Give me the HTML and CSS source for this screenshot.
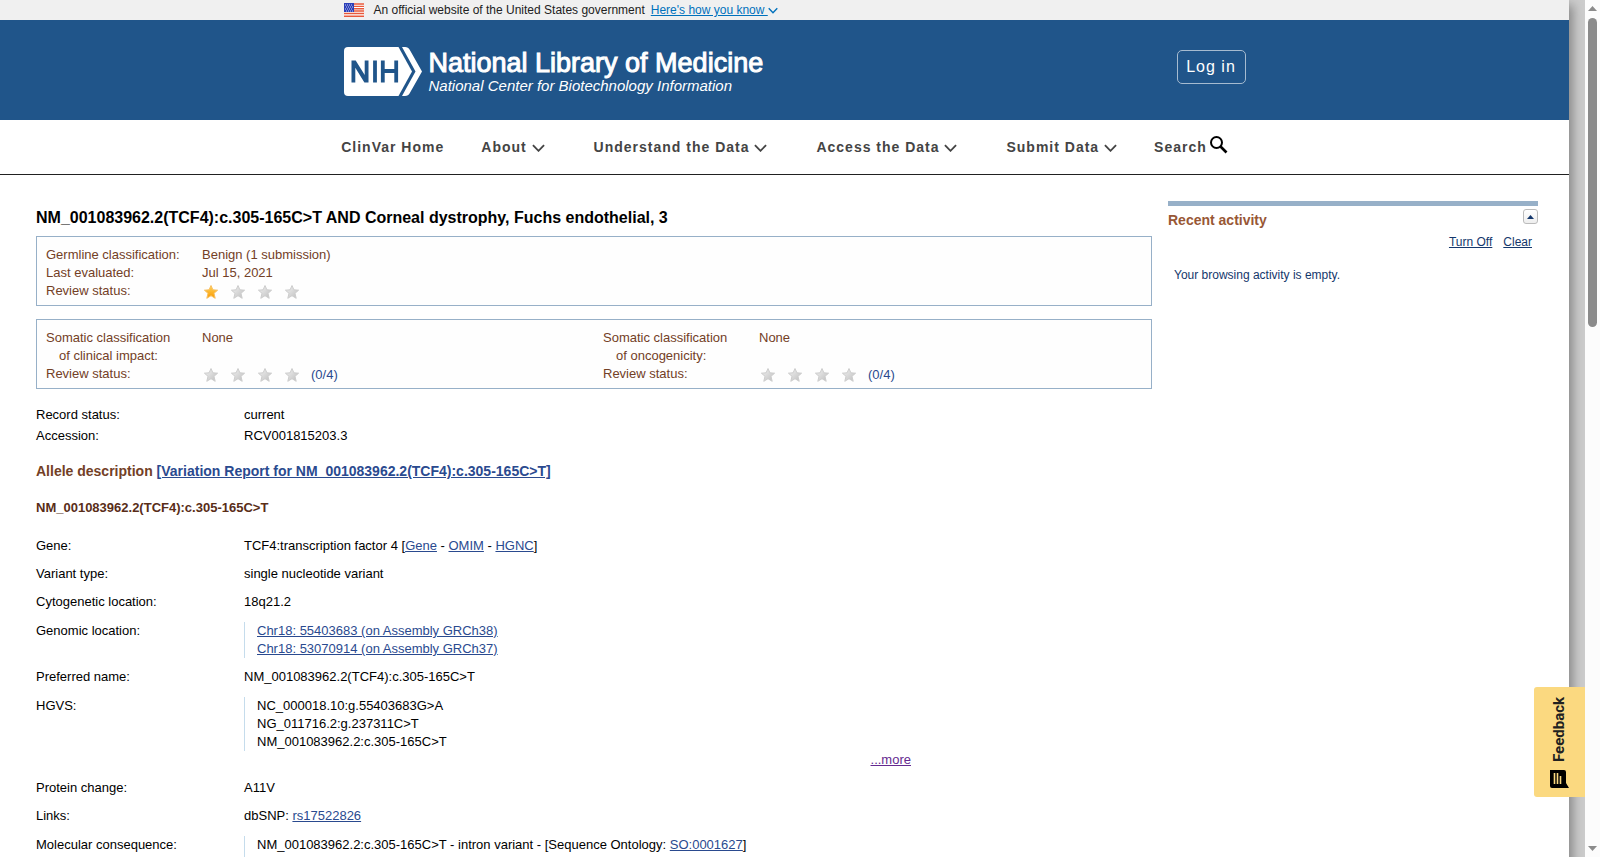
FILE: index.html
```html
<!DOCTYPE html>
<html lang="en">
<head>
    <meta charset="UTF-8">
    <meta name="viewport" content="width=device-width, initial-scale=1.0">
    <title>NM_001083962.2(TCF4):c.305-165C&gt;T AND Corneal dystrophy, Fuchs endothelial, 3 - ClinVar - NCBI</title>
    <link rel="stylesheet" href="styles.css">
</head>
<body>
    <!-- shared icons -->
    <svg class="sprite" aria-hidden="true">
        <defs>
            <linearGradient id="gold" x1="0" y1="0" x2="0" y2="1">
                <stop offset="0" stop-color="#ffd35a"/>
                <stop offset="1" stop-color="#fb9a00"/>
            </linearGradient>
            <linearGradient id="silver" x1="0" y1="0" x2="1" y2="1">
                <stop offset="0" stop-color="#f4f4f4"/>
                <stop offset="1" stop-color="#bdbdbd"/>
            </linearGradient>
        </defs>
        <symbol id="star" viewBox="0 0 16 16">
            <path d="M8 1.500l1.900 4.300 4.700.4-3.600 3.100 1.200 5L8 11.700 3.800 14.300l1.200-5L1.400 6.200l4.700-.4z"/>
        </symbol>
        <symbol id="chevron" viewBox="0 0 14 8">
            <path d="M1 1l6 6 6-6" fill="none" stroke="currentColor" stroke-width="2"/>
        </symbol>
    </svg>

    <div class="viewport">
        <div class="page">
            <div class="gov-banner">
                <div class="container">
                    <svg class="flag" viewBox="0 0 20 14" aria-hidden="true">
                        <rect width="20" height="14" fill="#fff"/>
                        <path d="M0 1h20M0 3.400h20M0 5.700h20M0 8h20M0 10.500h20M0 13.200h20" stroke="#e8583a" stroke-width="1.400"/>
                        <rect width="10" height="9" fill="#2b3fb8"/>
                        <path d="M1 2h8M2 4h8M1 6h8M2 8h7" stroke="#c5cbf0" stroke-dasharray="1 1"/>
                    </svg>
                    <span>An official website of the United States government</span>
                    <a href="#">Here's how you know <svg class="chevron-small"><use href="#chevron"/></svg></a>
                </div>
            </div>

            <header class="ncbi-header">
                <div class="container">
                    <a class="logo" href="#">
                        <svg class="nih" viewBox="0 0 78 49" aria-hidden="true">
                            <path d="M4 0h50.500l13.500 24.500L54.500 49H4a4 4 0 0 1-4-4V4a4 4 0 0 1 4-4z" fill="#fff"/>
                            <path d="M58 0h3c2.500 0 3.500.8 4.700 2.700L78 24.500 65.700 46.300C64.500 48.200 63.500 49 61 49h-3l13.500-24.500z" fill="#fff"/>
                            <path d="M7.500 35.500v-22h4.200l9 14.600V13.500h3.800v22h-4.100l-9.100-14.700v14.700z" fill="#20558a"/>
                            <path d="M31 13.500v22M38.800 13.500v22M52.200 13.500v22M38 24h14" fill="none" stroke="#20558a" stroke-width="3.800"/>
                        </svg>
                        <span class="logo-text">
                            <span class="logo-title">National Library of Medicine</span>
                            <span class="logo-sub">National Center for Biotechnology Information</span>
                        </span>
                    </a>
                    <button class="login" type="button">Log in</button>
                </div>
            </header>

            <nav class="main-nav">
                <ul>
                    <li><a href="#">ClinVar Home</a></li>
                    <li class="has-menu"><a href="#">About <svg class="chevron"><use href="#chevron"/></svg></a></li>
                    <li class="has-menu"><a href="#">Understand the Data <svg class="chevron"><use href="#chevron"/></svg></a></li>
                    <li class="has-menu"><a href="#">Access the Data <svg class="chevron"><use href="#chevron"/></svg></a></li>
                    <li><a href="#">Submit Data <svg class="chevron"><use href="#chevron"/></svg></a></li>
                    <li><a class="search" href="#">Search<svg class="magnifier" viewBox="0 0 18 18"><circle cx="6.500" cy="6.500" r="5.500" fill="none" stroke="#000" stroke-width="2"/><path d="M10.500 10.500l6 6" stroke="#000" stroke-width="2.600"/></svg></a></li>
                </ul>
            </nav>

            <div class="columns">
                <main class="record">
                    <h1>NM_001083962.2(TCF4):c.305-165C&gt;T AND Corneal dystrophy, Fuchs endothelial, 3</h1>

                    <section class="class-box">
                        <dl class="classification">
                            <dt>Germline classification:</dt>
                            <dd>Benign (1 submission)</dd>
                            <dt>Last evaluated:</dt>
                            <dd>Jul 15, 2021</dd>
                            <dt>Review status:</dt>
                            <dd class="stars">
                                <svg class="on"><use href="#star"/></svg>
                                <svg><use href="#star"/></svg>
                                <svg><use href="#star"/></svg>
                                <svg><use href="#star"/></svg>
                            </dd>
                        </dl>
                    </section>

                    <section class="class-box">
                        <dl class="classification">
                            <dt>Somatic classification<span class="second-line">of clinical impact:</span></dt>
                            <dd>None</dd>
                            <dt>Review status:</dt>
                            <dd class="stars">
                                <svg><use href="#star"/></svg>
                                <svg><use href="#star"/></svg>
                                <svg><use href="#star"/></svg>
                                <svg><use href="#star"/></svg>
                                <span>(0/4)</span>
                            </dd>
                        </dl>
                        <dl class="classification">
                            <dt>Somatic classification<span class="second-line">of oncogenicity:</span></dt>
                            <dd>None</dd>
                            <dt>Review status:</dt>
                            <dd class="stars">
                                <svg><use href="#star"/></svg>
                                <svg><use href="#star"/></svg>
                                <svg><use href="#star"/></svg>
                                <svg><use href="#star"/></svg>
                                <span>(0/4)</span>
                            </dd>
                        </dl>
                    </section>

                    <dl class="fields compact">
                        <div><dt>Record status:</dt><dd>current</dd></div>
                        <div><dt>Accession:</dt><dd>RCV001815203.3</dd></div>
                    </dl>

                    <h2>Allele description <a href="#">[Variation Report for NM_001083962.2(TCF4):c.305-165C&gt;T]</a></h2>
                    <h3>NM_001083962.2(TCF4):c.305-165C&gt;T</h3>

                    <dl class="fields">
                        <div>
                            <dt>Gene:</dt>
                            <dd>TCF4:transcription factor 4 [<a href="#">Gene</a> - <a href="#">OMIM</a> - <a href="#">HGNC</a>]</dd>
                        </div>
                        <div>
                            <dt>Variant type:</dt>
                            <dd>single nucleotide variant</dd>
                        </div>
                        <div>
                            <dt>Cytogenetic location:</dt>
                            <dd>18q21.2</dd>
                        </div>
                        <div class="multi">
                            <dt>Genomic location:</dt>
                            <dd>
                                <ul>
                                    <li><a href="#">Chr18: 55403683 (on Assembly GRCh38)</a></li>
                                    <li><a href="#">Chr18: 53070914 (on Assembly GRCh37)</a></li>
                                </ul>
                            </dd>
                        </div>
                        <div>
                            <dt>Preferred name:</dt>
                            <dd>NM_001083962.2(TCF4):c.305-165C&gt;T</dd>
                        </div>
                        <div class="multi">
                            <dt>HGVS:</dt>
                            <dd>
                                <ul>
                                    <li>NC_000018.10:g.55403683G&gt;A</li>
                                    <li>NG_011716.2:g.237311C&gt;T</li>
                                    <li>NM_001083962.2:c.305-165C&gt;T</li>
                                </ul>
                                <a class="more" href="#">...more</a>
                            </dd>
                        </div>
                        <div>
                            <dt>Protein change:</dt>
                            <dd>A11V</dd>
                        </div>
                        <div>
                            <dt>Links:</dt>
                            <dd>dbSNP: <a href="#">rs17522826</a></dd>
                        </div>
                        <div class="multi">
                            <dt>Molecular consequence:</dt>
                            <dd>
                                <ul>
                                    <li>NM_001083962.2:c.305-165C&gt;T - intron variant - [Sequence Ontology: <a href="#">SO:0001627</a>]</li>
                                    <li></li>
                                </ul>
                            </dd>
                        </div>
                    </dl>
                </main>

                <aside class="activity">
                    <div class="activity-head">
                        <h3>Recent activity</h3>
                        <button type="button" aria-label="Collapse recent activity"><svg viewBox="0 0 7 4"><path d="M0 4l3.500-4L7 4z" fill="#14376c"/></svg></button>
                    </div>
                    <div class="activity-links">
                        <a href="#">Turn Off</a>
                        <a href="#">Clear</a>
                    </div>
                    <p>Your browsing activity is empty.</p>
                </aside>
            </div>
        </div>

        <button class="feedback" type="button">
            <svg viewBox="0 0 19 19" aria-hidden="true">
                <path d="M2 0h16v14a2 2 0 0 1-2 2H5L0 19V2a2 2 0 0 1 2-2z"/>
                <path d="M4 4.500h11M4 7.500h11M4 10.500h8" stroke="#fbd980" stroke-width="1.600"/>
            </svg>
            <span>Feedback</span>
        </button>
    </div>

    <div class="scrollbar" aria-hidden="true">
        <svg viewBox="0 0 9 5"><path d="M0 5l4.500-5L9 5z"/></svg>
        <div class="thumb"></div>
        <svg viewBox="0 0 9 5"><path d="M0 0l4.500 5L9 0z"/></svg>
    </div>
</body>
</html>
```
FILE: styles.css
```css
* {
    margin: 0;
    padding: 0;
    box-sizing: border-box;
}

body {
    display: flex;
    height: 100vh;
    overflow: hidden;
    background-color: #ccc;
    color: #000;
    font-family: "Liberation Sans", Arial, sans-serif;
    font-size: 13px;
    line-height: 18px;
}

a {
    color: #2a4a8f;
}

button {
    font-family: inherit;
    cursor: pointer;
}

ul {
    list-style: none;
}

.sprite {
    position: absolute;
    width: 0;
    height: 0;
}

.viewport {
    position: relative;
    flex: 1;
    overflow: hidden;
    padding-right: 16px;
}

.page {
    min-height: 100%;
    background-color: #fff;
    box-shadow: 4px 5px 10px #888;
}

.container {
    display: flex;
    align-items: center;
    max-width: 922px;
    margin: 0 auto;
    padding-left: 20px;
}

/* Government banner */
.gov-banner {
    background-color: #f0f0f0;
    color: #212121;
    font-size: 12px;
    line-height: 20px;
}

.gov-banner a {
    color: #0071bc;
    margin-left: 6px;
}

.flag {
    width: 20px;
    height: 14px;
    margin-right: 10px;
}

.chevron-small {
    width: 10px;
    height: 7px;
}

/* Header */
.ncbi-header {
    background-color: #20558a;
}

.ncbi-header .container {
    justify-content: space-between;
    height: 100px;
}

.logo {
    display: flex;
    align-items: center;
    gap: 7px;
    color: #fff;
    text-decoration: none;
    margin-top: 3px;
}

.nih {
    width: 78px;
    height: 49px;
}

.logo-text {
    display: flex;
    flex-direction: column;
}

.logo-title {
    font-size: 27px;
    line-height: 28px;
    -webkit-text-stroke: 1px #fff;
}

.logo-sub {
    font-size: 15px;
    font-style: italic;
    line-height: 18px;
}

.login {
    height: 34px;
    min-width: 69px;
    padding: 0 8px;
    margin-bottom: 6px;
    border: 1px solid #a6bbd0;
    border-radius: 5px;
    background: none;
    color: #fff;
    font-size: 16px;
    letter-spacing: 1px;
}

/* Navigation */
.main-nav {
    border-bottom: 1px solid #212121;
}

.main-nav ul {
    display: flex;
    justify-content: center;
    gap: 37px;
    height: 54px;
    align-items: center;
}

.main-nav a {
    color: #444;
    font-size: 14px;
    font-weight: bold;
    letter-spacing: 1px;
    text-decoration: none;
    white-space: nowrap;
}

.has-menu {
    margin-right: 12px;
}

.chevron {
    width: 13px;
    height: 8px;
}

.search {
    display: flex;
    align-items: center;
}

.magnifier {
    width: 18px;
    height: 18px;
    margin: 0 0 4px 3px;
}

/* Two column layout */
.columns {
    display: flex;
    align-items: flex-start;
    gap: 16px;
    padding: 26px 31px 0 36px;
}

.record {
    flex: 1;
    padding-top: 7px;
}

h1 {
    font-size: 16px;
    line-height: 20px;
    margin-bottom: 8px;
}

.class-box {
    display: flex;
    margin-bottom: 13px;
    padding: 9px 0 5px;
    border: 1px solid #97b0c8;
    background-color: #fefefe;
    color: #734026;
}

.classification {
    display: grid;
    grid-template-columns: 156px 1fr;
    width: 50%;
    padding-left: 9px;
}

.second-line {
    display: block;
    padding-left: 13px;
}

.stars {
    display: flex;
    align-items: center;
    gap: 11px;
    height: 18px;
    padding: 2px 0 0 1px;
}

.stars svg {
    width: 16px;
    height: 16px;
    fill: url(#silver);
    stroke: #cdcdcd;
}

.stars .on {
    fill: url(#gold);
    stroke: #f8c060;
}

.stars span {
    color: #2a4a8f;
}

.fields > div {
    display: flex;
    padding: 5px 0;
}

.fields > .multi {
    padding-top: 6px;
}

.fields dt {
    width: 208px;
}

.fields dd {
    flex: 1;
}

.fields ul {
    padding-left: 12px;
    border-left: 1px solid #c5dcec;
}

.fields li {
    min-height: 18px;
}

.compact {
    padding-top: 4px;
}

.compact > div {
    padding: 0 0 3px;
}

.more {
    display: block;
    padding-left: 69%;
    color: #642a8f;
}

h2 {
    margin-top: 14px;
    color: #734026;
    font-size: 14px;
    line-height: 18px;
}

h3 {
    margin: 19px 0 15px;
    color: #592d18;
    font-size: 13px;
    line-height: 18px;
}

/* Recent activity */
.activity {
    width: 370px;
    border-top: 5px solid #97b0c8;
    color: #14376c;
    font-size: 12px;
}

.activity-head {
    display: flex;
    justify-content: space-between;
    align-items: flex-start;
    padding-top: 3px;
}

.activity-head h3 {
    margin: 2px 0 0;
    color: #985735;
    font-size: 14px;
}

.activity-head button {
    display: flex;
    align-items: center;
    justify-content: center;
    width: 15px;
    height: 15px;
    border: 1px solid #bbb;
    border-radius: 3px;
    background: linear-gradient(#fff, #eee);
}

.activity-head svg {
    width: 7px;
    height: 4px;
}

.activity-links {
    display: flex;
    justify-content: flex-end;
    gap: 11px;
    padding: 4px 6px 15px 0;
}

.activity-links a {
    color: #14376c;
}

.activity p {
    padding-left: 6px;
}

/* Feedback tab, floats over the page edge */
.feedback {
    position: absolute;
    right: 0;
    bottom: 60px;
    display: flex;
    align-items: center;
    gap: 7px;
    width: 51px;
    height: 110px;
    padding: 9px 16px;
    border: 0;
    border-radius: 0 3px 3px 0;
    background-color: #fbd980;
    color: #212121;
    font-family: Roboto, sans-serif;
    font-size: 15px;
    font-weight: bold;
    line-height: 19px;
    writing-mode: vertical-rl;
    transform: rotate(180deg);
}

.feedback svg {
    flex-shrink: 0;
    width: 19px;
    height: 19px;
    fill: #000;
    transform: rotate(90deg);
}

/* Scrollbar */
.scrollbar {
    display: flex;
    flex-direction: column;
    align-items: center;
    width: 15px;
    padding: 6px 0;
    background-color: #fcfcfc;
}

.scrollbar svg {
    width: 9px;
    height: 5px;
    fill: #8b8b8b;
}

.thumb {
    width: 9px;
    height: 36vh;
    margin: 7px 0 auto;
    border-radius: 5px;
    background-color: #8b8b8b;
}
```
